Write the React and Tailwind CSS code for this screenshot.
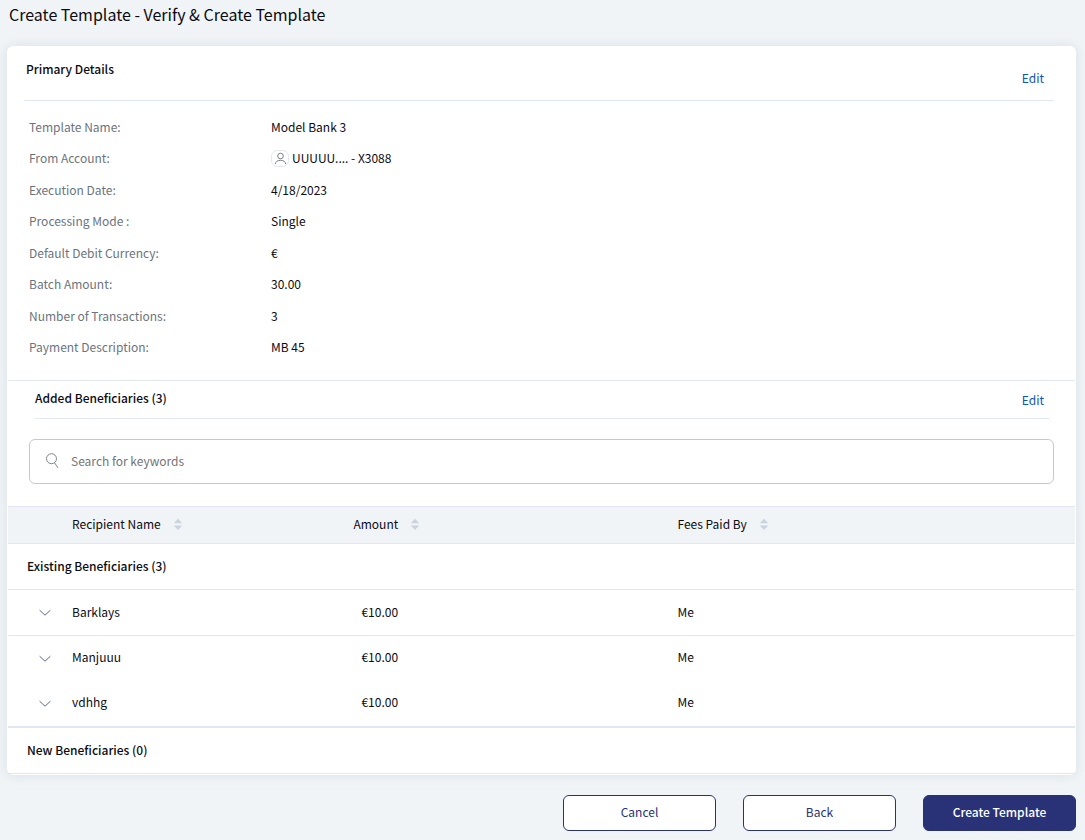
const details = [
  { label: "Template Name:", value: "Model Bank 3" },
  { label: "From Account:", value: "UUUUU.... - X3088", icon: true },
  { label: "Execution Date:", value: "4/18/2023" },
  { label: "Processing Mode :", value: "Single" },
  { label: "Default Debit Currency:", value: "€" },
  { label: "Batch Amount:", value: "30.00" },
  { label: "Number of Transactions:", value: "3" },
  { label: "Payment Description:", value: "MB 45" },
];

const beneficiaries = [
  { name: "Barklays", amount: "€10.00", fees: "Me", line: true },
  { name: "Manjuuu", amount: "€10.00", fees: "Me", line: false },
  { name: "vdhhg", amount: "€10.00", fees: "Me", line: false },
];

function UserIcon() {
  return (
    <svg className="size-[18px] shrink-0" viewBox="0 0 18 18" fill="none" aria-hidden="true">
      <rect x="0.5" y="1.5" width="17" height="16" rx="6" stroke="#e0e6ee" />
      <circle cx="9.5" cy="7" r="2.8" stroke="#7b7f86" />
      <path d="M4.3 15C4.6 12.6 6.6 11.3 9.5 11.3C12.4 11.3 14.4 12.6 14.7 15" stroke="#7b7f86" />
    </svg>
  );
}

function SearchIcon() {
  return (
    <svg className="h-4 w-[14px] shrink-0" viewBox="0 0 14 16" fill="none" stroke="#75797f" strokeWidth="0.9" aria-hidden="true">
      <circle cx="6.5" cy="5.7" r="5" />
      <path d="M9.5 9.7L13 14.9" />
    </svg>
  );
}

function SortIcon() {
  return (
    <svg className="h-3 w-2" viewBox="0 0 8 12" fill="#cbd4de" aria-hidden="true">
      <path d="M4 0.8L7.8 4.8V5.3H0.2V4.8Z" />
      <path d="M4 12L7.8 8V7.5H0.2V8Z" />
    </svg>
  );
}

function Chevron() {
  return (
    <svg className="h-[7px] w-3" viewBox="0 0 12 7" fill="none" stroke="#5d6795" aria-hidden="true">
      <path d="M0.6 1.2L6 6.2L11.4 1.2" />
    </svg>
  );
}

function SortHeader({ children }) {
  return (
    <button type="button" className="flex items-center gap-[13px]">
      {children}
      <SortIcon />
    </button>
  );
}

export default function App() {
  return (
    <div className="min-h-screen bg-[#f0f4f7] pr-[9px] pb-[9px] pl-[7px] font-['Noto_Sans_CJK_SC','Noto_Sans',sans-serif] text-[12px] leading-5 text-[#0b0b12]">
      <h1 className="px-0.5 pt-0.5 pb-5 text-[16px] leading-6">
        Create Template - Verify &amp; Create Template
      </h1>

      <main className="rounded-md border border-white bg-white shadow-[0_0_12px_rgba(40,50,80,0.1)]">
        <section>
          <header className="mr-[21px] ml-4 flex items-start justify-between border-b border-[#e1e7ef] pr-[10px] pb-3 pl-0.5 pt-3">
            <h2 className="font-medium">Primary Details</h2>
            <a href="#primary" className="mt-[9px] text-[#0d55b0]">Edit</a>
          </header>
          <dl className="grid min-h-[279px] auto-rows-fr px-[21px] pt-[10px] pb-[17px]">
            {details.map((d) => (
              <div key={d.label} className="flex items-center">
                <dt className="w-[242px] text-[#6b747d]">{d.label}</dt>
                <dd className="flex items-center gap-[3px]">
                  {d.icon && <UserIcon />}
                  {d.value}
                </dd>
              </div>
            ))}
          </dl>
        </section>

        <section className="border-t border-[#e1e7ef]">
          <header className="mr-[26px] ml-[27px] flex items-start justify-between border-b border-[#e1e7ef] pt-[7px] pb-2 pr-[5px]">
            <h2 className="font-medium">Added Beneficiaries (3)</h2>
            <a href="#beneficiaries" className="mt-0.5 text-[#0d55b0]">Edit</a>
          </header>

          <label className="mx-[21px] mt-5 mb-[22px] flex items-center gap-3 rounded-md border border-[#c5c9ce] px-[15px] pt-[11px] pb-3">
            <SearchIcon />
            <input
              type="text"
              aria-label="Search for keywords"
              placeholder="Search for keywords"
              className="min-w-0 flex-1 leading-5 outline-none placeholder:text-[#757575]"
            />
          </label>

          <table className="w-full table-fixed border-collapse text-left">
            <colgroup>
              <col className="w-[6%]" />
              <col className="w-[26%]" />
              <col className="w-[30%]" />
              <col />
            </colgroup>
            <thead>
              <tr className="h-[37px] border-y border-[#e1e7ef] bg-[#f0f4f7]">
                <th aria-label="Expand" />
                <th className="pb-0.5 font-normal"><SortHeader>Recipient Name</SortHeader></th>
                <th className="pb-0.5 pl-1 font-normal"><SortHeader>Amount</SortHeader></th>
                <th className="pb-0.5 pl-2 font-normal"><SortHeader>Fees Paid By</SortHeader></th>
              </tr>
            </thead>
            <tbody>
              <tr className="h-[46px] border-b border-[#e1e7ef]">
                <th colSpan={4} className="pb-0.5 pl-[19px] font-medium">Existing Beneficiaries (3)</th>
              </tr>
              {beneficiaries.map((b, i) => (
                <tr
                  key={b.name}
                  className={
                    b.line
                      ? "h-[46px] border-b border-[#e1e7ef]"
                      : i === beneficiaries.length - 1
                        ? "h-[46px]"
                        : "h-[45px]"
                  }
                >
                  <td className="pl-[31px]">
                    <button type="button" aria-label={"Expand " + b.name} className="block">
                      <Chevron />
                    </button>
                  </td>
                  <td className="pb-0.5">{b.name}</td>
                  <td className="pb-0.5 pl-3">{b.amount}</td>
                  <td className="pb-0.5 pl-2">{b.fees}</td>
                </tr>
              ))}
              <tr className="h-[47px] border-t-2 border-b border-t-[#e1e7ef] border-b-[#e1e7ef]">
                <th colSpan={4} className="pl-[19px] font-medium">New Beneficiaries (0)</th>
              </tr>
            </tbody>
          </table>
        </section>
      </main>

      <footer className="mt-5 flex justify-end gap-[27px]">
        <button type="button" className="h-9 w-[153px] rounded-md border border-[#293276] bg-white pb-0.5 text-[#293276]">Cancel</button>
        <button type="button" className="h-9 w-[153px] rounded-md border border-[#293276] bg-white pb-0.5 text-[#293276]">Back</button>
        <button type="button" className="h-9 w-[153px] rounded-md border border-[#293276] bg-[#293276] pb-0.5 font-medium text-white">Create Template</button>
      </footer>
    </div>
  );
}
